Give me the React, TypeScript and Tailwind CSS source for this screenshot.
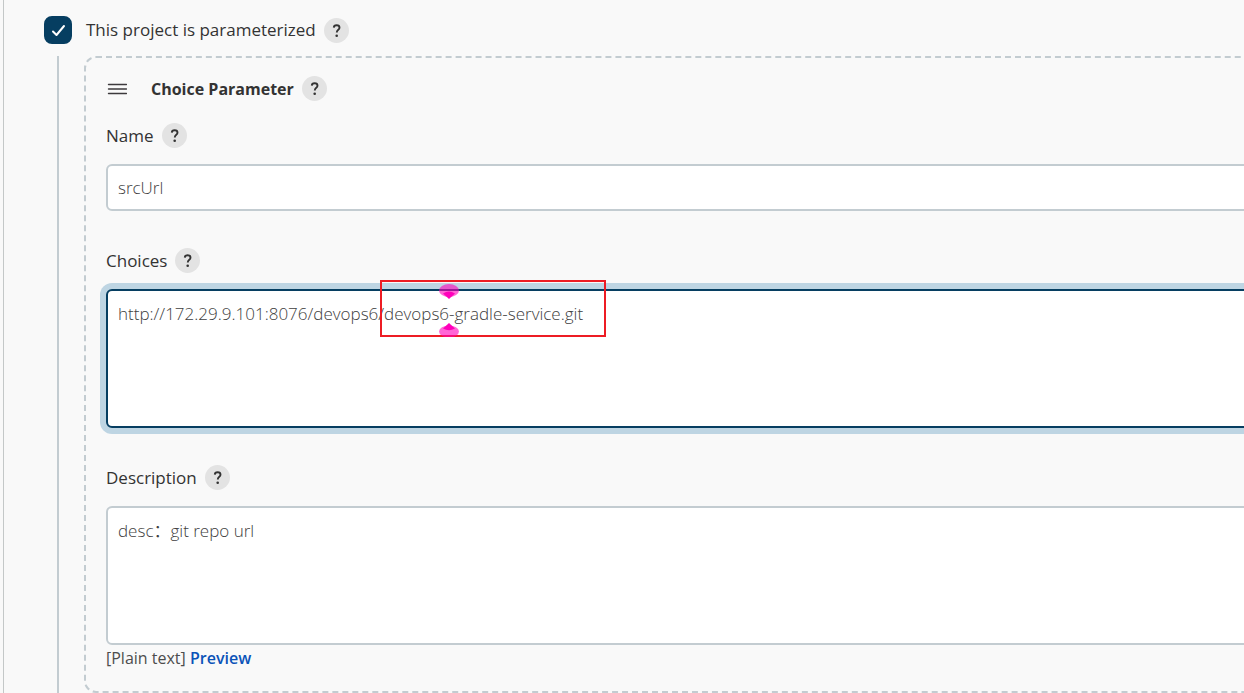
import { useState, type ReactNode } from 'react';

function HelpButton({ topic }: { topic: string }) {
  return (
    <button
      type="button"
      aria-label={`Help for feature: ${topic}`}
      className="flex h-[25px] w-[25px] shrink-0 items-center justify-center rounded-full bg-[#e3e3e3] text-[#333333]"
    >
      <svg viewBox="0 0 25 25" className="h-[25px] w-[25px]" fill="none" aria-hidden="true">
        <path
          d="M9.8 9.600C9.900 8 11 7.300 12.600 7.300c1.700 0 2.900.9 2.900 2.400 0 1.200-.7 1.700-1.500 2.300-.9.7-1.200 1.200-1.200 2.500"
          stroke="currentColor"
          strokeWidth="1.900"
        />
        <circle cx="12.700" cy="17.700" r="1.300" fill="currentColor" />
      </svg>
    </button>
  );
}

function FieldLabel({ id, children }: { id: string; children: string }) {
  return (
    <div className="mb-4 flex h-[25px] items-center gap-2">
      <label htmlFor={id} className="text-[17px] leading-6">
        {children}
      </label>
      <HelpButton topic={children} />
    </div>
  );
}

function Highlight() {
  return (
    <div
      aria-hidden="true"
      className="pointer-events-none absolute -top-[9px] left-[274px] h-[57px] w-[226px] border-2 border-[#ed1c24]"
    >
      <svg viewBox="0 0 20 54" className="absolute top-px left-[57px] h-[54px] w-5">
        <ellipse cx="10" cy="7.500" rx="10" ry="6.500" fill="#ff00bb" fillOpacity="0.6" />
        <path d="M4 10.500Q10 6.500 16 10.500L10 16Z" fill="#ff00bb" />
        <ellipse cx="10" cy="48.500" rx="10" ry="6" fill="#ff00bb" fillOpacity="0.6" />
        <path d="M4 45.500Q10 49 16 45.500L10 40Z" fill="#ff00bb" />
      </svg>
    </div>
  );
}

function Field({ children }: { children: ReactNode }) {
  return <div className="relative mb-[37px]">{children}</div>;
}

const control =
  'block w-full rounded-md border-2 border-[#c3ccd1] bg-white px-[10px] text-[17px] font-[350] text-[#404040] outline-none';

export default function App() {
  const [enabled, setEnabled] = useState(true);
  const [name, setName] = useState('srcUrl');
  const [choices, setChoices] = useState(
    'http://172.29.9.101:8076/devops6/devops6-gradle-service.git',
  );
  const [description, setDescription] = useState('desc：git repo url');

  return (
    <div className="min-h-screen overflow-x-hidden bg-[#f9f9f9] pl-[3px] font-['Open_Sans','Noto_Sans_CJK_SC',sans-serif] text-[#333333]">
      <main className="min-h-screen border-l border-[#c4c8c8] pt-4 pl-10">
        <div className="flex h-7 items-center">
          <span className="relative h-7 w-7 shrink-0">
            <input
              id="parameterized"
              type="checkbox"
              checked={enabled}
              onChange={(e) => setEnabled(e.target.checked)}
              className="peer block h-7 w-7 appearance-none rounded-lg border-2 border-[#c3ccd1] bg-white checked:border-[#063e61] checked:bg-[#063e61]"
            />
            <svg
              viewBox="0 0 28 28"
              aria-hidden="true"
              className="pointer-events-none absolute inset-0 hidden h-7 w-7 peer-checked:block"
              fill="none"
            >
              <path
                d="M9 15.500L12.500 19L20 10"
                stroke="white"
                strokeWidth="2"
                strokeLinecap="round"
                strokeLinejoin="round"
              />
            </svg>
          </span>
          <label htmlFor="parameterized" className="mr-2 pl-[14px] text-[17px] leading-6">
            This project is parameterized
          </label>
          <HelpButton topic="This project is parameterized" />
        </div>

        <div className="mt-3 ml-[13px] border-l-2 border-[#c3ccd1] pl-[25px]">
          <section className="-mr-10 rounded-xl border-2 border-dashed border-[#c3ccd1] px-5 pt-[18px] pb-5">
            <header className="mb-[22px] flex h-[25px] items-center">
              <button type="button" aria-label="Reorder parameter" className="mr-6 w-[21px]">
                <svg viewBox="0 0 21 12" className="block h-3 w-[21px]" aria-hidden="true">
                  <path
                    d="M2.500 1.500H20.500M2.500 6H20.500M2.500 10.500H20.500"
                    stroke="#3d3a3d"
                    strokeWidth="1.400"
                    strokeLinecap="round"
                  />
                </svg>
              </button>
              <h2 className="mr-2 text-base leading-6 font-bold">Choice Parameter</h2>
              <HelpButton topic="Choice Parameter" />
            </header>

            <FieldLabel id="name">Name</FieldLabel>
            <Field>
              <input
                id="name"
                type="text"
                value={name}
                onChange={(e) => setName(e.target.value)}
                className={`${control} h-[47px]`}
              />
            </Field>

            <FieldLabel id="choices">Choices</FieldLabel>
            <Field>
              <textarea
                id="choices"
                value={choices}
                onChange={(e) => setChoices(e.target.value)}
                className="block h-[139px] w-full resize-none rounded-md border-2 border-[#063e61] bg-white px-[10px] py-[10px] text-[17px] leading-[26px] font-[350] text-[#404040] ring-[6px] ring-[#bed5e3] outline-none"
              />
              <Highlight />
            </Field>

            <FieldLabel id="description">Description</FieldLabel>
            <textarea
              id="description"
              value={description}
              onChange={(e) => setDescription(e.target.value)}
              className={`${control} h-[139px] resize-none py-[10px] leading-[26px]`}
            />
            <p className="text-base leading-[26px] text-[#4d4d4d]">
              [Plain text]{' '}
              <a href="#preview" className="font-semibold text-[#0b53b8]">
                Preview
              </a>
            </p>
          </section>
        </div>
      </main>
    </div>
  );
}
